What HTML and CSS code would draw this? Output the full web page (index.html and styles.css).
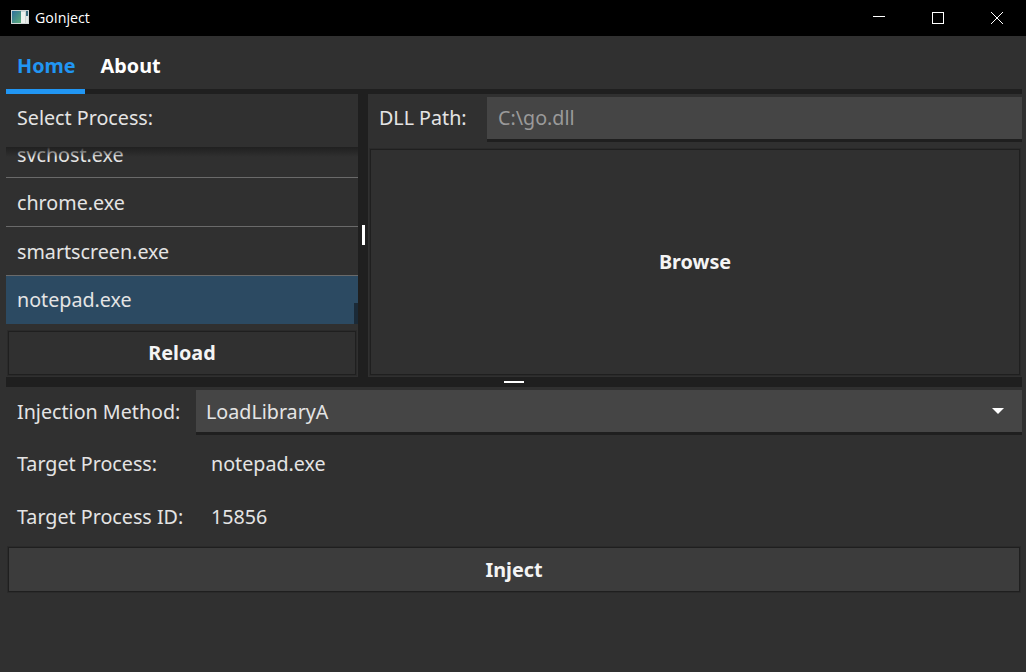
FILE: index.html
```html
<!DOCTYPE html>
<html lang="en">
<head>
<meta charset="utf-8">
<title>GoInject</title>
<link rel="stylesheet" href="styles.css">
</head>
<body>
<div class="window">
  <header class="titlebar">
    <svg class="app-icon" width="18" height="14" viewBox="0 0 18 14">
      <defs>
        <linearGradient id="appgrad" x1="0" y1="0" x2="1" y2="1">
          <stop offset="0" stop-color="#2f6f9c"/>
          <stop offset="1" stop-color="#5fae7a"/>
        </linearGradient>
      </defs>
      <rect x="0" y="0" width="18" height="14" fill="#cfd6d6"/>
      <rect x="1" y="1" width="9" height="12" fill="url(#appgrad)"/>
      <rect x="10" y="2" width="4" height="11" fill="#eef2ee"/>
      <rect x="15" y="1" width="2" height="5" fill="#3b6f80"/>
      <rect x="15" y="6" width="2" height="7" fill="#e6eae6"/>
    </svg>
    <span class="app-title">GoInject</span>
    <div class="window-controls">
      <span class="wc"><svg width="12" height="12" viewBox="0 0 12 12"><path d="M0 4.5H12" stroke="#fff" stroke-width="1"/></svg></span>
      <span class="wc"><svg width="12" height="12" viewBox="0 0 12 12"><rect x=".5" y=".5" width="11" height="11" fill="none" stroke="#fff"/></svg></span>
      <span class="wc"><svg width="12" height="12" viewBox="0 0 12 12"><path d="M0 0L12 12M12 0L0 12" stroke="#fff" stroke-width="1"/></svg></span>
    </div>
  </header>

  <main class="content">
    <nav class="tabs">
      <span class="tab active">Home</span>
      <span class="tab">About</span>
    </nav>
    <div class="tabline"><span class="tabline-fill"></span></div>

    <section class="top-split">
      <div class="left-pane">
        <div class="pane-label">Select Process:</div>
        <div class="list">
          <div class="item clipped">svchost.exe</div>
          <div class="item">chrome.exe</div>
          <div class="item">smartscreen.exe</div>
          <div class="item selected">notepad.exe</div>
          <span class="list-shadow"></span>
          <span class="scroll-thumb"></span>
        </div>
        <div class="btn-wrap"><button class="btn reload">Reload</button></div>
      </div>
      <div class="v-splitter"><span class="v-handle"></span></div>
      <div class="right-pane">
        <div class="dll-row">
          <span class="dll-label">DLL Path:</span>
          <div class="field dll-field">C:\go.dll</div>
        </div>
        <div class="browse-wrap"><button class="btn browse">Browse</button></div>
      </div>
    </section>

    <div class="h-splitter"><span class="h-handle"></span></div>

    <section class="bottom">
      <div class="method-row">
        <span class="method-label">Injection Method:</span>
        <div class="field combo">
          <span>LoadLibraryA</span>
          <svg class="caret" width="12" height="6" viewBox="0 0 12 6"><path d="M0 0H12L6 6Z" fill="#fff"/></svg>
        </div>
      </div>
      <div class="info-row"><span class="info-label">Target Process:</span><span>notepad.exe</span></div>
      <div class="info-row"><span class="info-label">Target Process ID:</span><span>15856</span></div>
      <div class="inject-wrap"><button class="btn inject">Inject</button></div>
    </section>
  </main>
</div>
</body>
</html>
```
FILE: styles.css
```css
* { box-sizing: border-box; }
html, body { margin: 0; height: 100%; overflow: hidden; background: #303030; }
body { font-family: "Noto Sans", sans-serif; font-size: 19.7px; color: #e4e4e4; }
.window { width: 1026px; height: 672px; display: flex; flex-direction: column; }

.titlebar { height: 36px; background: #000; display: flex; align-items: center; padding-left: 11px; flex: none; }
.app-icon { margin-right: 6px; margin-top: -2px; }
.app-title { font-family: "Open Sans", "Noto Sans", sans-serif; font-size: 14.2px; color: #fff; margin-top: -2px; }
.window-controls { margin-left: auto; display: flex; }
.wc { width: 59px; height: 36px; display: flex; align-items: center; justify-content: center; }

.content { flex: 1; padding: 0 4px 0 6px; display: flex; flex-direction: column; min-height: 0; }

.tabs { height: 53px; display: flex; gap: 3px; flex: none; }
.tab { font-weight: 700; font-size: 19.8px; color: #fff; padding: 0 11px; display: flex; align-items: center; height: 59px; line-height: 1; }
.tab.active { color: #2196f3; }
.tabline { height: 5px; background: #1f1f1f; flex: none; }
.tabline-fill { display: block; width: 79px; height: 5px; background: #2196f3; }

.top-split { height: 283px; display: flex; flex: none; }
.left-pane { width: 352px; display: flex; flex-direction: column; }
.pane-label { height: 53px; display: flex; align-items: center; padding-left: 11px; padding-bottom: 7px; flex: none; }
.list { height: 177px; position: relative; overflow: hidden; flex: none; }
.item { height: 49px; display: flex; align-items: center; padding-left: 11px; border-bottom: 1px solid #6a6a6a; }
.item.clipped { height: 31px; align-items: flex-end; padding-bottom: 9px; }
.item.selected { background: #2c4a62; height: 48px; border-bottom: 0; padding-bottom: 1px; }
.list-shadow { position: absolute; left: 0; right: 0; top: 0; height: 10px; background: linear-gradient(#202020, rgba(32,32,32,0)); }
.scroll-thumb { position: absolute; right: 0; bottom: 0; width: 4px; height: 21px; background: #1b2a37; }
.btn-wrap { flex: 1; padding: 7px 2px 2px; }

.btn { width: 100%; height: 100%; display: block; margin: 0; padding: 0 0 2px; font-family: inherit; font-weight: 700; font-size: 19.8px; color: #f4f4f4; background: #303030; border: 1px solid #1f1f1f; box-shadow: 0 0 0 1px #2a2a2a; }

.v-splitter { width: 10px; background: #1f1f1f; position: relative; flex: none; }
.v-handle { position: absolute; left: 4px; top: 131px; width: 3px; height: 20px; background: #fff; }

.right-pane { flex: 1; display: flex; flex-direction: column; min-width: 0; }
.dll-row { height: 55px; display: flex; padding-top: 3px; flex: none; }
.dll-label { width: 119px; padding-left: 11px; height: 40px; display: flex; align-items: center; }
.field { background: #454545; border-bottom: 3px solid #1f1f1f; height: 45px; display: flex; align-items: center; padding-left: 11px; }
.dll-field { flex: 1; color: #9a9a9a; padding-bottom: 2px; }
.browse-wrap { flex: 1; padding: 0 2px 2px; }

.h-splitter { height: 10px; background: #1f1f1f; position: relative; flex: none; }
.h-handle { position: absolute; left: 498px; top: 4px; width: 20px; height: 2px; background: #fff; }

.bottom { display: flex; flex-direction: column; flex: 1; }
.method-row { display: flex; padding-top: 3px; height: 51px; flex: none; }
.method-label { width: 190px; padding-left: 11px; height: 42px; display: flex; align-items: center; }
.combo { flex: 1; padding-left: 10px; padding-right: 18px; justify-content: space-between; }
.info-row { height: 53px; display: flex; align-items: center; padding-left: 11px; padding-bottom: 2px; flex: none; }
.info-label { width: 194px; }
.inject-wrap { padding: 3px 2px 0; height: 48px; flex: none; }
.btn.inject { background: #3c3c3c; padding: 0; }
```
